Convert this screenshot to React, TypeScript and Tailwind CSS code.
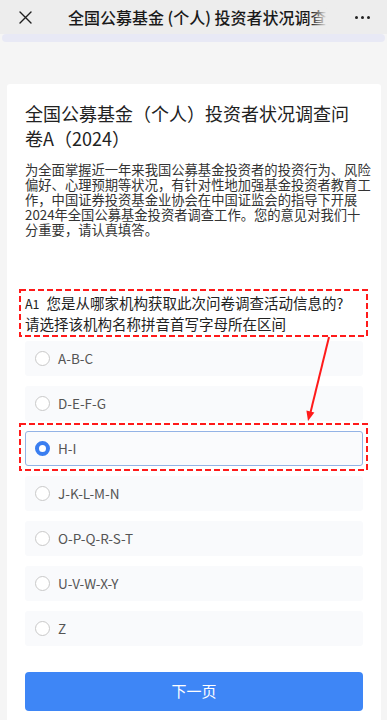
import React from 'react';

const options = ['A-B-C', 'D-E-F-G', 'H-I', 'J-K-L-M-N', 'O-P-Q-R-S-T', 'U-V-W-X-Y', 'Z'];
const selected = 'H-I';

const intro = [
  '为全面掌握近一年来我国公募基金投资者的投资行为、风险',
  '偏好、心理预期等状况，有针对性地加强基金投资者教育工',
  '作，中国证券投资基金业协会在中国证监会的指导下开展',
  '2024年全国公募基金投资者调查工作。您的意见对我们十',
  '分重要，请认真填答。',
];

const Radio: React.FC<{ checked: boolean }> = ({ checked }) =>
  checked ? (
    <span className="w-[15px] h-[15px] rounded-full border-[4px] border-[#3a7ef0] bg-white shrink-0" />
  ) : (
    <span className="w-[15px] h-[15px] rounded-full border border-[#c9c9c9] bg-white shrink-0" />
  );

const App: React.FC = () => {
  return (
    <div className="relative w-[387px] h-[720px] overflow-hidden bg-[#f5f5f5] font-['Noto_Sans_CJK_SC',sans-serif]">
      {/* top bar */}
      <header className="h-[34px] bg-[#ededed] flex items-center">
        <div className="w-[50px] flex justify-center">
          <svg width="13" height="13" viewBox="0 0 13 13" fill="none" stroke="#1f1f1f" strokeWidth="1.4" strokeLinecap="round">
            <path d="M1 1L12 12M12 1L1 12" />
          </svg>
        </div>
        <div className="relative ml-[18px] whitespace-nowrap text-[16px] leading-[34px] font-medium text-[#1a1a1a]">
          全国公募基金 (个人) 投资者状况调查
          <div className="absolute right-0 top-0 h-full w-[16px] bg-gradient-to-r from-transparent to-[#ededed]" />
        </div>
        <div className="ml-auto mr-[17px] flex gap-[3px]">
          <span className="w-[3px] h-[3px] rounded-full bg-[#222]" />
          <span className="w-[3px] h-[3px] rounded-full bg-[#222]" />
          <span className="w-[3px] h-[3px] rounded-full bg-[#222]" />
        </div>
      </header>
      <div className="mx-[2px] h-[8px] rounded-full bg-[#e8e9f5]" />

      {/* card */}
      <main className="mt-[42px] ml-[7px] mr-[6px] bg-white rounded-t-[3px] px-[18px] pt-[17px] pb-[20px]">
        <h1 className="text-[18px] leading-[25px] text-[#222] whitespace-nowrap">
          全国公募基金（个人）投资者状况调查问
          <br />
          卷A（2024）
        </h1>
        <p className="mt-[11px] text-[13.3px] leading-[15px] text-[#333] whitespace-nowrap">
          {intro.map((line, i) => (
            <React.Fragment key={i}>
              {line}
              {i < intro.length - 1 && <br />}
            </React.Fragment>
          ))}
        </p>

        <div className="mt-[56px] text-[14.5px] leading-[20px] text-[#222] whitespace-nowrap">
          <span className="text-[12.5px] mr-[7px]">A1</span>
          您是从哪家机构获取此次问卷调查活动信息的?
          <br />
          请选择该机构名称拼音首写字母所在区间
        </div>

        <ul className="mt-[7px] flex flex-col gap-[10px]">
          {options.map((o) => {
            const on = o === selected;
            return (
              <li
                key={o}
                className={
                  on
                    ? 'h-[35px] flex items-center gap-[8px] pl-[9px] rounded-[3px] border border-[#93b3e6] bg-[#fafbfd] text-[13.5px] text-[#555]'
                    : 'h-[35px] flex items-center gap-[8px] pl-[10px] rounded-[3px] bg-[#f9fafc] text-[13.5px] text-[#555]'
                }
              >
                <Radio checked={on} />
                <span>{o}</span>
              </li>
            );
          })}
        </ul>

        <button className="mt-[26px] w-full h-[39px] rounded-[4px] bg-[#3e86f6] text-white text-[15px]">下一页</button>
      </main>

      {/* red annotations */}
      <svg className="absolute inset-0 pointer-events-none" width="387" height="720" viewBox="0 0 387 720">
        <rect x="20" y="290" width="347" height="46" fill="none" stroke="#ff1a1a" strokeWidth="2" strokeDasharray="6 3" />
        <rect x="20" y="424" width="347" height="46" fill="none" stroke="#ff1a1a" strokeWidth="2" strokeDasharray="6 3" />
        <line x1="329" y1="337" x2="310.6" y2="412" stroke="#ff1a1a" strokeWidth="2" />
        <polygon points="308,421 314.4,412.4 306.4,410.4" fill="#ff1a1a" />
      </svg>
    </div>
  );
};

export default App;
